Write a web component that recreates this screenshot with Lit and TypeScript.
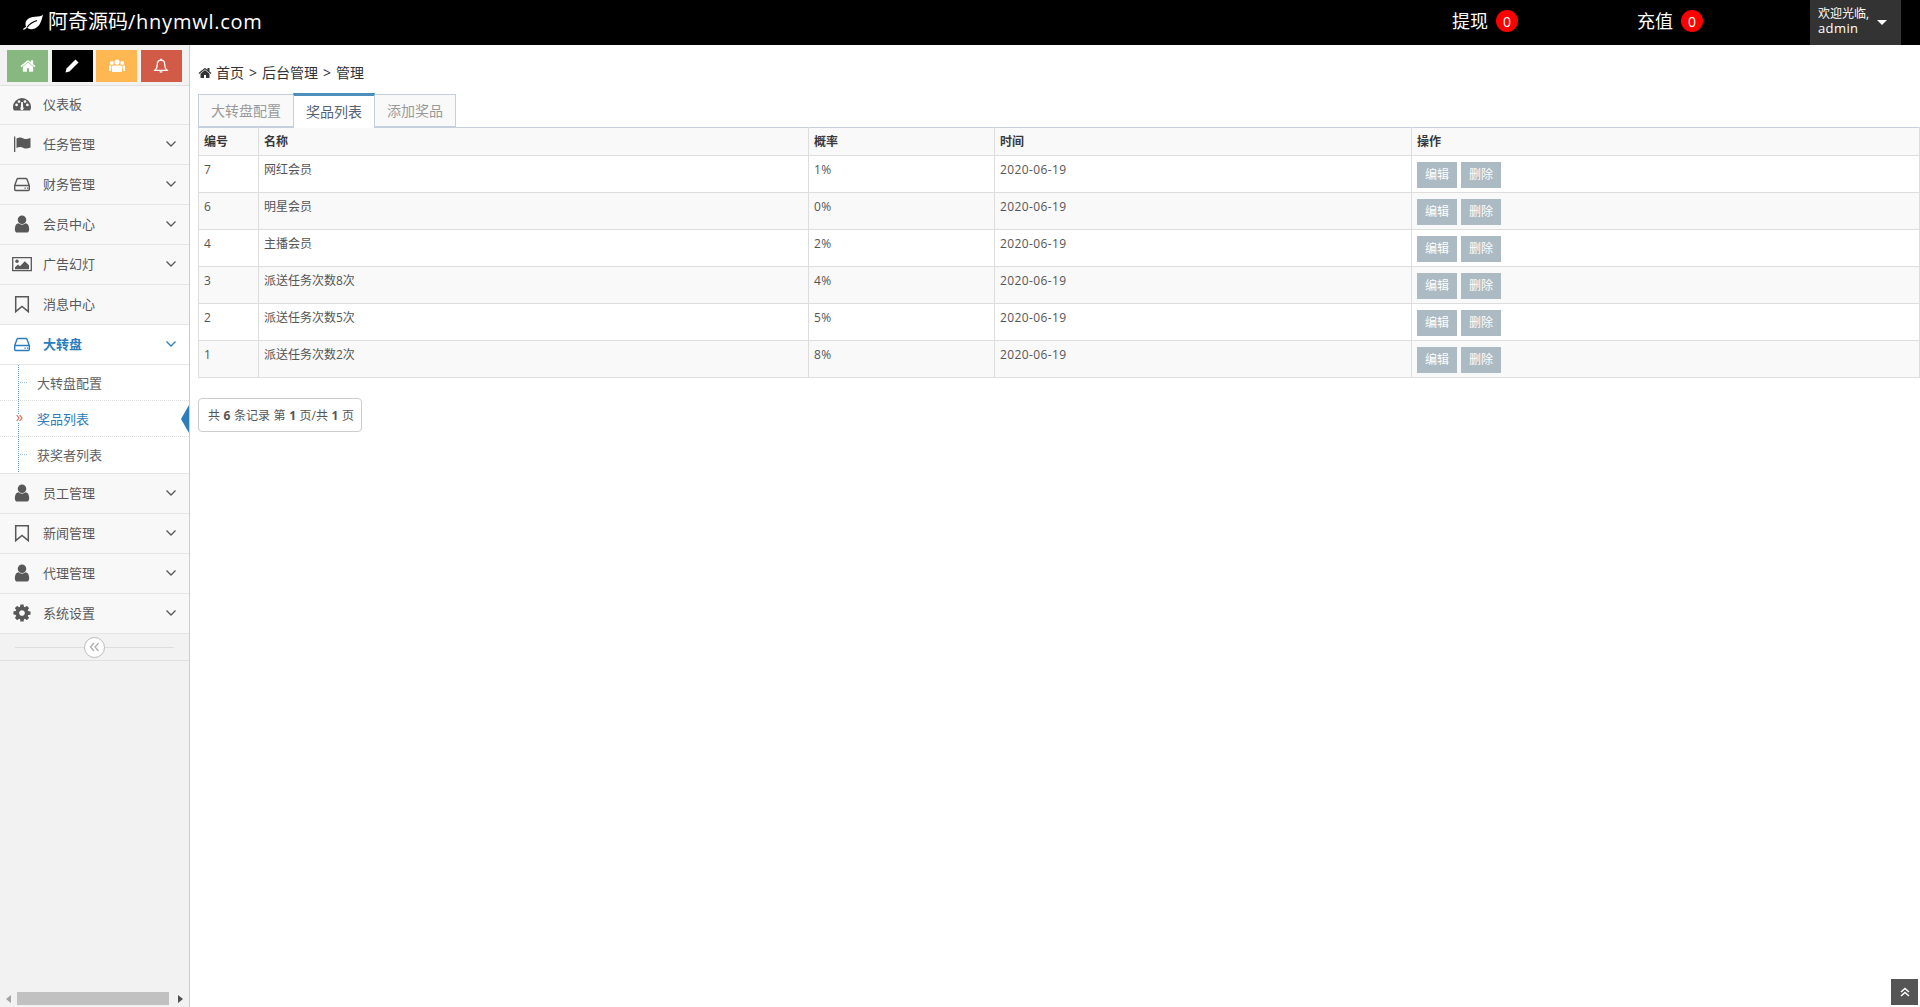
import { LitElement, html, css, svg } from "lit";
import { customElement } from "lit/decorators.js";

const FA = (d: string) => html`<svg class="fa" viewBox="0 0 1792 1792" fill="currentColor"><path d=${d}></path></svg>`;
const USER = "M1536 1399q0 109-62.5 187t-150.5 78h-854q-88 0-150.5-78t-62.5-187q0-85 8.5-160.5t31.5-152 58.5-131 94-89 134.5-34.5q131 128 313 128t313-128q76 0 134.5 34.5t94 89 58.5 131 31.5 152 8.5 160.5zm-256-887q0 159-112.5 271.5t-271.5 112.5-271.5-112.5-112.5-271.5 112.5-271.5 271.5-112.5 271.5 112.5 112.5 271.5z";
const HOME = "M1472 992v480q0 26-19 45t-45 19h-384v-384h-256v384h-384q-26 0-45-19t-19-45v-480q0-1 .5-3t.5-3l575-474 575 474q1 2 1 6zm223-69l-62 74q-8 9-21 11h-3q-13 0-21-7l-692-577-692 577q-12 8-24 7-13-2-21-11l-62-74q-8-10-7-23.5t11-21.5l719-599q32-26 76-26t76 26l244 204v-195q0-14 9-23t23-9h192q14 0 23 9t9 23v408l219 182q10 8 11 21.5t-7 23.5z";
const COG = "M1152 896q0-106-75-181t-181-75-181 75-75 181 75 181 181 75 181-75 75-181zm512-109v222q0 12-8 23t-20 13l-185 28q-19 54-39 91 35 50 107 138 10 12 10 25t-9 23q-27 37-99 108t-94 71q-12 0-26-9l-138-108q-44 23-91 38-16 136-29 186-7 28-36 28h-222q-14 0-24.5-8.5t-11.5-21.5l-28-184q-49-16-90-37l-141 107q-10 9-25 9-14 0-25-11-126-114-165-168-7-10-7-23 0-12 8-23 15-21 51-66.5t54-70.5q-27-50-41-99l-183-27q-13-2-21-12.5t-8-23.5v-222q0-12 8-23t19-13l186-28q14-46 39-92-40-57-107-138-10-12-10-24 0-10 9-23 26-36 98.5-107.5t94.5-71.5q13 0 26 10l138 107q44-23 91-38 16-136 29-186 7-28 36-28h222q14 0 24.5 8.5t11.5 21.5l28 184q49 16 90 37l142-107q9-9 24-9 13 0 25 10 129 119 165 170 7 8 7 22 0 12-8 23-15 21-51 66.5t-54 70.5q26 50 41 98l183 28q13 2 21 12.5t8 23.5z";

const box = (body: unknown) => html`<svg class="ic" viewBox="0 0 20 20">${body}</svg>`;
const icons: Record<string, () => unknown> = {
  tacho: () => box(svg`<path fill="currentColor" fill-rule="evenodd" d="M1 13a9 9 0 0 1 18 0c0 1.600-.4 2.600-1 3.500H2c-.6-.9-1-1.900-1-3.500zM4.600 9.500a1.400 1.400 0 1 0 0 2.800 1.400 1.400 0 0 0 0-2.800zM7 6.200a1.400 1.400 0 1 0 0 2.800 1.400 1.400 0 0 0 0-2.800zM13 6.200a1.400 1.400 0 1 0 0 2.800 1.400 1.400 0 0 0 0-2.800zM15.400 9.500a1.400 1.400 0 1 0 0 2.800 1.400 1.400 0 0 0 0-2.800zM10.800 8 9.200 8l-.4 5.200a1.700 1.700 0 1 0 2.400 0z"/>`),
  flag: () => box(svg`<path fill="currentColor" d="M2 2.500h1.300V18H2zM4.500 4.500c3-1.600 5.200-1 7 0 2 .9 4 .6 7-.5v9.500c-3 1.200-5 1.400-7 .4-1.800-1-4-1.500-7 0z"/>`),
  hdd: () => box(svg`<path fill="none" stroke="currentColor" stroke-width="1.400" d="M2.700 11.500 5 5.200q.3-.7 1-.7h8q.7 0 1 .7l2.300 6.300v4q0 1-1 1H3.700q-1 0-1-1zM2.700 11.500h14.600"/><path fill="currentColor" d="M12.500 13.500h1.300v1.300h-1.300zM15 13.500h1.300v1.300H15z"/>`),
  user: () => FA(USER),
  pic: () => box(svg`<path fill="none" stroke="currentColor" stroke-width="1.300" d="M.7 3.700h18.600v13H.7z"/><circle cx="5" cy="7.300" r="1.700" fill="currentColor"/><path fill="currentColor" d="M3 15.200v-2l3-2.800 2 1.800 4.800-5 4.200 4v4z"/>`),
  mark: () => box(svg`<path fill="none" stroke="currentColor" stroke-width="1.500" d="M3.700 2.800h12.600v14.800L10 12.500l-6.300 5.100z"/>`),
  cog: () => FA(COG),
};

const menu = [
  { icon: "tacho", label: "仪表板", arrow: false },
  { icon: "flag", label: "任务管理", arrow: true },
  { icon: "hdd", label: "财务管理", arrow: true },
  { icon: "user", label: "会员中心", arrow: true },
  { icon: "pic", label: "广告幻灯", arrow: true },
  { icon: "mark", label: "消息中心", arrow: false },
  { icon: "hdd", label: "大转盘", arrow: true, active: true },
  { icon: "user", label: "员工管理", arrow: true },
  { icon: "mark", label: "新闻管理", arrow: true },
  { icon: "user", label: "代理管理", arrow: true },
  { icon: "cog", label: "系统设置", arrow: true },
];
const rows = [
  ["7", "网红会员", "1%"],
  ["6", "明星会员", "0%"],
  ["4", "主播会员", "2%"],
  ["3", "派送任务次数8次", "4%"],
  ["2", "派送任务次数5次", "5%"],
  ["1", "派送任务次数2次", "8%"],
];

@customElement("app-root")
export class AppRoot extends LitElement {
  static styles = css`
    :host { display: flex; flex-direction: column; height: 1007px; overflow: hidden; position: relative; background: #fff; color: #555; font: 13px "Open Sans", "Noto Sans CJK SC", sans-serif; }
    svg { display: block; }
    .top { height: 45px; flex: none; background: #000; color: #fff; display: flex; align-items: center; }
    .brand { display: flex; align-items: center; font-size: 20px; margin-left: 22px; gap: 5px; width: 1430px; }
    .brand svg { width: 21px; height: 16px; margin-bottom: 2px; }
    .brand span { padding-bottom: 4px; }
    .brand em { font-style: normal; letter-spacing: .75px; }
    .stat { display: flex; align-items: center; font-size: 18px; gap: 8px; width: 185px; margin-bottom: 3px; }
    .stat > span:first-child { padding-bottom: 2px; }
    .badge { width: 22px; height: 22px; border-radius: 50%; background: #f00; font-size: 14px; display: flex; align-items: center; justify-content: center; }
    .usr { margin-left: -12px; width: 91px; height: 45px; background: #333; display: flex; align-items: center; box-sizing: border-box; padding: 0 14px 0 8px; font-size: 12px; line-height: 15px; justify-content: space-between; }
    .usr > span { padding-bottom: 3px; }
    .usr em { font-style: normal; font-size: 13px; letter-spacing: .4px; }
    .caret { width: 0; height: 0; border: 5px solid transparent; border-top-color: #fff; border-bottom: 0; }
    .body { flex: 1; display: flex; min-height: 0; }
    .side { width: 190px; box-sizing: border-box; flex: none; background: #f2f2f2; border-right: 1px solid #ccc; display: flex; flex-direction: column; }
    .short { padding: 5px 0 0 7px; box-sizing: border-box; display: flex; gap: 3.67px; border-bottom: 1px solid #e0e0e0; height: 41px; }
    .short div { width: 41px; height: 32px; color: #fff; display: flex; align-items: center; justify-content: center; }
    .short svg { width: 16px; height: 16px; }
    .item { height: 39px; box-sizing: content-box; border-bottom: 1px solid #e5e5e5; background: #f8f8f8; display: flex; align-items: center; padding-left: 12px; color: #585858; }
    .item.first { height: 38px; }
    .item.on { background: #fff; color: #2b7dbc; font-weight: 700; }
    .item .fa, .item .ic { width: 20px; height: 20px; flex: none; margin-right: 11px; margin-bottom: 2px; }
    .item .lab { flex: 1; padding-bottom: 3px; }
    .item .chev { width: 12px; height: 8px; margin-right: 12px; margin-bottom: 2px; }
    .sub { position: relative; background: #fff; }
    .sub-item { height: 35px; border-bottom: 1px dotted #ddd; padding-left: 37px; display: flex; align-items: center; color: #616161; position: relative; }
    .sub-item:last-child { height: 36px; padding-bottom: 1px; box-sizing: content-box; height: 35px; border-bottom: 1px solid #e5e5e5; }
    .sub-item.on { color: #2b7dbc; }
    .tick { position: absolute; left: 20px; top: 17px; width: 7px; border-top: 1px dotted #9dbdd6; }
    .vline { position: absolute; left: 18px; top: 0; bottom: 0; border-left: 1px dotted #6ea3cc; }
    .dbl { position: absolute; left: 16px; top: 13px; width: 7px; height: 8px; color: #d0705a; background: #fff; }
    .dbl svg { width: 7px; height: 8px; }
    .point { position: absolute; right: 0; top: 4px; width: 0; height: 0; border: 14px solid transparent; border-left: 0; border-right: 8px solid #2b7dbc; }
    .collapse { height: 26px; border-bottom: 1px solid #e0e0e0; position: relative; display: flex; align-items: center; justify-content: center; }
    .collapse::before { content: ""; position: absolute; left: 15px; right: 15px; top: 13px; border-top: 1px solid #ddd; }
    .circle { width: 19px; height: 19px; border: 1px solid #bbb; border-radius: 50%; background: #fff; color: #aaa; position: relative; display: flex; align-items: center; justify-content: center; }
    .circle svg { width: 11px; height: 10px; }
    .bar { margin-top: auto; height: 17px; display: flex; align-items: center; padding: 0 6px; gap: 6px; }
    .thumb { width: 153px; height: 13px; background: #c1c1c1; }
    .la, .ra { width: 0; height: 0; border: 4px solid transparent; }
    .la { border-left: 0; border-right: 5px solid #a3a3a3; }
    .ra { border-right: 0; border-left: 5px solid #505050; margin-left: 3px; }
    .main { flex: 1; padding-left: 8px; min-width: 0; color: #333; }
    .crumb { height: 48px; display: flex; align-items: center; padding-top: 6px; box-sizing: border-box; font-size: 14px; gap: 5px; }
    .crumb .fa { width: 14px; height: 14px; margin: 1px -1px 0 0; }
    .tabs { display: flex; height: 34px; align-items: flex-end; }
    .tab { height: 33px; box-sizing: border-box; border: 1px solid #c5d0dc; padding: 0 12px 2px; display: flex; align-items: center; font-size: 14px; background: #f9f9f9; color: #999; margin-left: -1px; }
    .tab:first-child { margin-left: 0; }
    .tab.on { height: 35px; background: #fff; color: #576373; border-top: 3px solid #4c8fbd; border-bottom: 0; margin-bottom: -1px; position: relative; z-index: 1; }
    table { width: 100%; table-layout: fixed; border-collapse: collapse; font-size: 12px; color: #555; }
    th { height: 28px; padding: 0 5px 2px; box-sizing: border-box; background: #f9f9f9; text-align: left; color: #393939; border: 1px solid #ddd; border-top-color: #c5d0dc; font-weight: 700; }
    td { height: 37px; padding: 6px 5px 0; vertical-align: top; border: 1px solid #ddd; line-height: 16px; box-sizing: border-box; }
    td.num { letter-spacing: .4px; }
    tr.alt td { background: #f9f9f9; }
    .btns { display: flex; gap: 4px; }
    .btn { width: 40px; height: 26px; background: #abbac3; color: #fff; display: flex; align-items: center; justify-content: center; font-size: 12px; }
    .c1 { width: 60px; } .c2 { width: 550px; } .c3 { width: 186px; } .c4 { width: 417px; }
    .page { display: inline-block; line-height: 33px; height: 34px; box-sizing: border-box; margin-top: 20px; padding: 0 7px 0 9px; border: 1px solid #ccc; border-radius: 4px; font-size: 12px; color: #555; word-spacing: .45px; }
    .up { position: absolute; right: 2px; bottom: 2px; width: 27px; height: 26px; background: #555; color: #fff; display: flex; align-items: center; justify-content: center; }
    .up svg { width: 10px; height: 10px; }
  `;

  private chev() {
    return html`<svg class="chev" viewBox="0 0 12 8"><path d="M1.500 1.500 6 6l4.500-4.500" fill="none" stroke="currentColor" stroke-width="1.300"></path></svg>`;
  }

  private renderItem(m: (typeof menu)[number], i: number) {
    const cls = `item${i === 0 ? " first" : ""}${m.active ? " on" : ""}`;
    return html`<div class=${cls}>${icons[m.icon]()}<span class="lab">${m.label}</span>${m.arrow ? this.chev() : ""}</div>`;
  }

  render() {
    return html`
      <div class="top">
        <div class="brand">
          <svg viewBox="0 0 21 16"><path fill="#fff" d="M21 .5c-2 2-4 2-8 2.300C7 3 3.500 6 3.500 10c0 1 .2 2 .5 2.800L1 15l.8 1L5 13.800c1.500 1.200 3.500 1.700 6 1.200C17 14 19.500 8 21 .5z"/><path fill="none" stroke="#000" stroke-width="1.200" d="M5 13.500C7 10.500 10 8 15 6.500"/></svg>
          <span>阿奇源码<em>/hnymwl.com</em></span>
        </div>
        <div class="stat"><span>提现</span><span class="badge">0</span></div>
        <div class="stat"><span>充值</span><span class="badge">0</span></div>
        <div class="usr"><span>欢迎光临,<br /><em>admin</em></span><i class="caret"></i></div>
      </div>
      <div class="body">
        <div class="side">
          <div class="short">
            <div style="background:#87b87f">${FA(HOME)}</div>
            <div style="background:#000">
              <svg viewBox="0 0 16 16"><path fill="#fff" d="M11.500 1.500 14.500 4.500 5.500 13.500 1.500 14.500 2.500 10.500z"/></svg>
            </div>
            <div style="background:#ffb752">
              <svg viewBox="0 0 16 16"><g fill="#fff"><circle cx="8" cy="4" r="2.600"/><circle cx="2.800" cy="5" r="1.900"/><circle cx="13.200" cy="5" r="1.900"/><path d="M4.300 7.500h7.400q1.300 0 1.300 1.500v5H3V9q0-1.500 1.300-1.500zM0 7.500h2.500L2 13H0zM13.500 7.500H16V13h-2z"/></g></svg>
            </div>
            <div style="background:#d15b47">
              <svg viewBox="0 0 16 16"><path fill="none" stroke="#fff" stroke-width="1.300" d="M8 2.200C5.300 2.200 4.300 4 4.300 6.500c0 3-1 4.600-2.300 5.800h12c-1.300-1.200-2.300-2.800-2.300-5.800C11.700 4 10.700 2.200 8 2.200z"/><path fill="#fff" d="M6.400 13.200h3.200a1.600 1.600 0 0 1-3.200 0zM7.200.8h1.600v1.500H7.200z"/></svg>
            </div>
          </div>
          ${menu.slice(0, 7).map((m, i) => this.renderItem(m, i))}
          <div class="sub">
            <div class="vline"></div>
            <div class="sub-item"><i class="tick"></i>大转盘配置</div>
            <div class="sub-item on">
              <span class="dbl"><svg viewBox="0 0 7 8"><path d="M.7 1l2.300 3L.7 7M3.700 1 6 4 3.700 7" fill="none" stroke="currentColor" stroke-width="1.200"></path></svg></span>奖品列表<i class="point"></i>
            </div>
            <div class="sub-item"><i class="tick"></i>获奖者列表</div>
          </div>
          ${menu.slice(7).map((m, i) => this.renderItem(m, i + 7))}
          <div class="collapse">
            <div class="circle">
              <svg viewBox="0 0 11 10"><path d="M5 1 1.500 5 5 9M9.500 1 6 5l3.500 4" fill="none" stroke="currentColor" stroke-width="1.200"></path></svg>
            </div>
          </div>
          <div class="bar"><i class="la"></i><div class="thumb"></div><i class="ra"></i></div>
        </div>
        <div class="main">
          <div class="crumb">${FA(HOME)}<span>首页</span><span>&gt;</span><span>后台管理</span><span>&gt;</span><span>管理</span></div>
          <div class="tabs">
            <div class="tab">大转盘配置</div>
            <div class="tab on">奖品列表</div>
            <div class="tab">添加奖品</div>
          </div>
          <table>
            <colgroup><col class="c1" /><col class="c2" /><col class="c3" /><col class="c4" /><col /></colgroup>
            <thead><tr><th>编号</th><th>名称</th><th>概率</th><th>时间</th><th>操作</th></tr></thead>
            <tbody>
              ${rows.map(
                (r, i) => html`<tr class=${i % 2 ? "alt" : ""}>
                  <td>${r[0]}</td><td>${r[1]}</td><td class="num">${r[2]}</td><td class="num">2020-06-19</td>
                  <td><div class="btns"><span class="btn">编辑</span><span class="btn">删除</span></div></td>
                </tr>`
              )}
            </tbody>
          </table>
          <div class="page">共 <b>6</b> 条记录 第 <b>1</b> 页/共 <b>1</b> 页</div>
        </div>
      </div>
      <div class="up">
        <svg viewBox="0 0 10 10"><path d="M1 5 5 1.500 9 5M1 9 5 5.500 9 9" fill="none" stroke="currentColor" stroke-width="1.500"></path></svg>
      </div>
    `;
  }
}
